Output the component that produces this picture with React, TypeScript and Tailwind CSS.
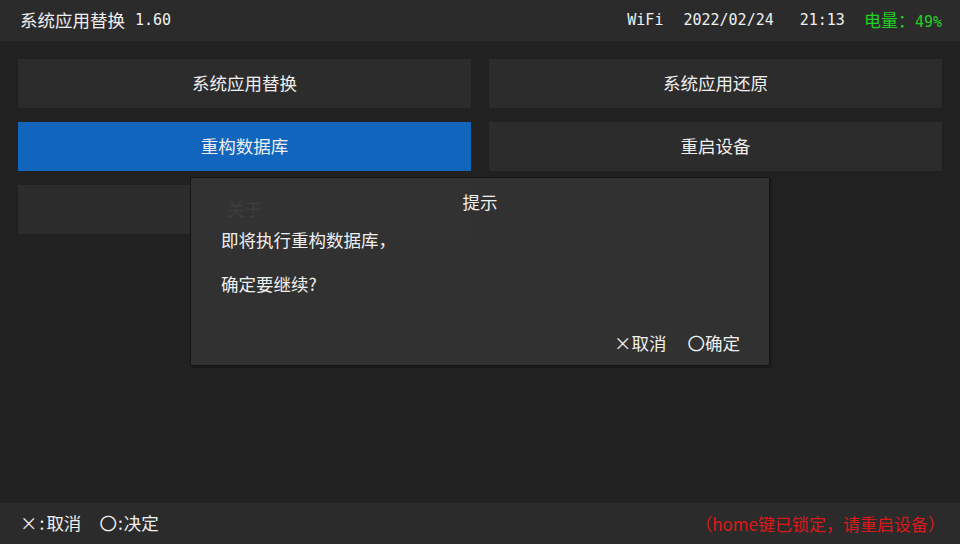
import React from 'react';

const menuItems = [
    { id: 'replace', label: '系统应用替换' },
    { id: 'restore', label: '系统应用还原' },
    { id: 'rebuild', label: '重构数据库' },
    { id: 'reboot', label: '重启设备' },
    { id: 'about', label: '关于' },
];

const cjk = "font-['Noto_Sans_CJK_SC','Noto_Sans',sans-serif]";
const mono = "font-['DejaVu_Sans_Mono','Liberation_Mono',monospace]";

const App: React.FC = () => {
    const activeId = 'rebuild';

    return (
        <div className={`w-[960px] h-[544px] flex flex-col bg-[#212121] text-[#f0f0f0] overflow-hidden ${cjk}`}>
            {/* Status bar */}
            <header className="h-[41px] shrink-0 bg-[#2b2b2b] flex items-center justify-between pl-[20px] pr-[18px] text-[17.5px]">
                <div className="flex items-center">
                    <span>系统应用替换</span>
                    <span className={`ml-[10px] text-[15px] ${mono}`}>1.60</span>
                </div>
                <div className="flex items-center text-[15px]">
                    <span className={mono}>WiFi</span>
                    <span className={`ml-[20px] ${mono}`}>2022/02/24</span>
                    <span className={`ml-[26px] ${mono}`}>21:13</span>
                    <span className="ml-[19px] text-[17px] text-[#22d022]">
                        电量：<span className={`text-[15px] ${mono}`}>49%</span>
                    </span>
                </div>
            </header>

            {/* Menu */}
            <main className="relative flex-1 px-[18px] pt-[18px]">
                <div className="grid grid-cols-2 gap-x-[18px] gap-y-[14px]">
                    {menuItems.map(item => (
                        <div
                            key={item.id}
                            className={`h-[49px] flex items-center justify-center text-[17.5px] ${
                                item.id === activeId ? 'bg-[#1265bd]' : 'bg-[#2c2c2c]'
                            }`}
                        >
                            {item.label}
                        </div>
                    ))}
                </div>

                {/* Confirm dialog */}
                <div className="absolute left-[190px] top-[136px] w-[580px] h-[189px] bg-[#333333]/95 border border-[#141414] shadow-[2px_2px_0_#1a1a1a] flex flex-col text-[17.5px]">
                    <div className="text-center pt-[11px] leading-[26px]">提示</div>
                    <div className="pl-[30px] mt-[12px] leading-[26px]">即将执行重构数据库，</div>
                    <div className="pl-[30px] mt-[18px] leading-[26px]">确定要继续?</div>
                    <div className="mt-auto mb-[9px] flex justify-end pr-[29px] leading-[26px]">
                        <span>×取消</span>
                        <span className="ml-[21px]">〇确定</span>
                    </div>
                </div>
            </main>

            {/* Footer hints */}
            <footer className="h-[41px] shrink-0 bg-[#2b2b2b] flex items-center justify-between pl-[20px] pr-[15px] text-[17.5px]">
                <div className="flex items-center">
                    <span>×</span>
                    <span className="mx-[2px]">:</span>
                    <span>取消</span>
                    <span className="ml-[18px]">〇</span>
                    <span className="mx-[1px]">:</span>
                    <span>决定</span>
                </div>
                <span className="text-[17px] text-[#d91a1a]">（home键已锁定，请重启设备）</span>
            </footer>
        </div>
    );
};

export default App;
